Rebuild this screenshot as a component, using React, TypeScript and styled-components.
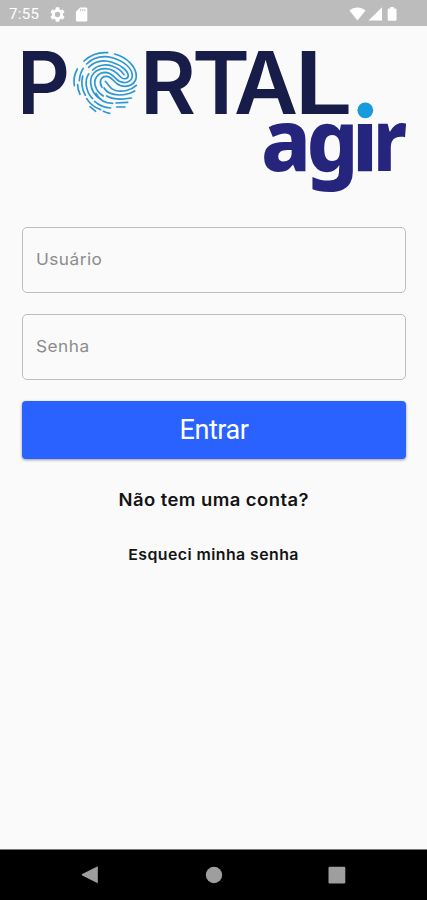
import React from 'react';
import styled, { createGlobalStyle } from 'styled-components';

const GlobalStyle = createGlobalStyle`
  * { box-sizing: border-box; }
  body { margin: 0; background: #fafafa; }
`;

const Screen = styled.div`
  width: 100%;
  height: 100vh;
  display: flex;
  flex-direction: column;
  background: #fafafa;
  font-family: Inter, 'Open Sans', sans-serif;
  overflow: hidden;
`;

const StatusBar = styled.header`
  height: 26px;
  flex: none;
  display: flex;
  align-items: center;
  justify-content: space-between;
  padding: 2px 27px 0 9px;
  background: #bcbcbc;
  color: #fff;
`;

const StatusGroup = styled.div<{ $gap: number }>`
  display: flex;
  align-items: center;
  gap: ${(p) => p.$gap}px;
  svg { display: block; }
`;

const Clock = styled.span`
  font: 400 15px/20px Roboto, sans-serif;
  letter-spacing: 0.3px;
  margin-right: 3px;
`;

const Content = styled.main`
  flex: 1;
  display: flex;
  flex-direction: column;
  align-items: stretch;
  padding: 14px 21px 0 22px;
`;

const Logo = styled.svg`
  display: block;
  width: 384px;
  height: 160px;
  margin-bottom: 27px;
  overflow: visible;
`;

const Field = styled.label`
  height: 66px;
  flex: none;
  display: flex;
  align-items: center;
  gap: 8px;
  padding: 0 13px 2px;
  margin-bottom: 21px;
  border: 1.5px solid #bdbdbd;
  border-radius: 5px;
`;

const FieldLabel = styled.span`
  font-size: 16.5px;
  line-height: 24px;
  letter-spacing: 0.45px;
  color: #8c8c8c;
  transform: scaleX(1.045);
  transform-origin: left;
`;

const FieldInput = styled.input`
  flex: 1;
  min-width: 0;
  border: 0;
  outline: 0;
  background: transparent;
  font: inherit;
`;

const SubmitButton = styled.button`
  height: 58px;
  flex: none;
  border: 0;
  border-radius: 4px;
  padding: 0;
  background: #2962ff;
  color: #fff;
  font: 400 27px/58px Roboto, sans-serif;
  letter-spacing: -0.45px;
  box-shadow: 0 1px 3px rgba(0, 0, 0, 0.4);
`;

const TextLink = styled.a<{ $size: number; $top: number }>`
  align-self: center;
  margin-top: ${(p) => p.$top}px;
  font-size: ${(p) => p.$size}px;
  font-weight: 600;
  line-height: 24px;
  letter-spacing: 0.4px;
  color: #141414;
  white-space: nowrap;
  transform: scaleX(${(p) => (p.$size > 16 ? 1.085 : 1.06)});
`;

const NavBar = styled.nav`
  height: 51px;
  flex: none;
  display: flex;
  align-items: center;
  justify-content: space-between;
  padding: 0 81px 0 80px;
  background: #000;
  border-top: 1px solid #777;
  svg { display: block; }
`;

const wordmark = [
  { letter: 'P', x: 17, width: 53 },
  { letter: 'R', x: 140, width: 56 },
  { letter: 'T', x: 192, width: 58 },
  { letter: 'A', x: 234, width: 64 },
  { letter: 'L', x: 294.2, width: 58.5 },
];

const agir = [
  { letter: 'a', x: 261, width: 50 },
  { letter: 'g', x: 306.5, width: 52 },
  { letter: 'i', x: 352, width: 26 },
  { letter: 'r', x: 373, width: 34 },
];

// Fingerprint ridges, from the outer whorl to the loose ends at the bottom.
const ridges = [
  'M72 63C90 46 117 36 143 38',
  'M164 42C202 52 230 82 229 110C227 132 206 144 182 137C160 130 158 108 138 109C122 110 116 126 126 142',
  'M80 72C104 48 134 47 160 54C192 64 217 84 217 108C216 126 194 132 178 124C164 116 158 98 137 97C112 97 100 118 106 138C110 152 120 162 130 168',
  'M58 122C59 108 62 96 70 85',
  'M86 82C106 62 132 59 156 67C184 76 204 92 205 107C204 118 190 119 182 111C170 98 158 86 136 86C106 86 90 106 92 130C94 150 106 168 122 178',
  'M98 90C114 74 138 72 156 78C174 84 186 94 192 104',
  'M86 102C72 122 78 156 98 176',
  'M52 87C43 103 40 120 43 137',
  'M68 108C62 132 66 148 76 166',
  'M53 134C53 144 56 154 60 163',
  'M136 124C146 132 148 146 164 151C188 158 214 150 229 136',
  'M132 144C140 158 156 164 178 165C196 165 212 160 224 153',
  'M140 168C154 176 172 178 192 177L214 174',
  'M108 160C118 180 138 190 158 190',
  'M168 189L203 187',
  'M104 184C118 197 134 203 152 204',
  'M80 176C90 192 104 203 122 209',
  'M90 200L107 214',
  'M130 214C136 217 142 219 149 220',
  'M170 201L195 201',
];

function PortalLogo() {
  return (
    <Logo viewBox="22 40 384 160" role="img" aria-label="Portal agir">
      <defs>
        <clipPath id="below-dot">
          <rect x="255" y="120.5" width="160" height="80" />
        </clipPath>
      </defs>
      <g fill="#171d48" fontFamily="Inter, sans-serif" fontWeight="600" fontSize="87">
        {wordmark.map((l) => (
          <text key={l.letter} x={l.x} y="114.3" textLength={l.width} lengthAdjust="spacingAndGlyphs">
            {l.letter}
          </text>
        ))}
      </g>
      <g transform="translate(60 40) scale(.3333)" fill="none" stroke="#2c97d3" strokeWidth="5" strokeLinecap="round">
        {ridges.map((d) => (
          <path key={d} d={d} />
        ))}
      </g>
      <g fill="#25257e" fontFamily="'Noto Sans', sans-serif" fontWeight="800" fontSize="86" clipPath="url(#below-dot)">
        {agir.map((l) => (
          <text key={l.letter} x={l.x} y="170.7" textLength={l.width} lengthAdjust="spacingAndGlyphs">
            {l.letter}
          </text>
        ))}
      </g>
      <circle cx="365.3" cy="110.3" r="7.9" fill="#189bdc" />
    </Logo>
  );
}

export default function App() {
  return (
    <Screen>
      <GlobalStyle />
      <StatusBar>
        <StatusGroup $gap={8}>
          <Clock>7:55</Clock>
          <svg width="15" height="15" viewBox="2 2 20 20" fill="#fff">
            <path d="M19.14 12.94c.04-.3.06-.61.06-.94s-.02-.64-.07-.94l2.03-1.58a.49.49 0 0 0 .12-.61l-1.92-3.32a.49.49 0 0 0-.59-.22l-2.39.96a7 7 0 0 0-1.62-.94l-.36-2.54a.48.48 0 0 0-.48-.41h-3.84a.48.48 0 0 0-.47.41l-.36 2.54c-.59.24-1.13.57-1.62.94l-2.39-.96a.48.48 0 0 0-.59.22L2.74 8.87a.48.48 0 0 0 .12.61l2.03 1.58a7.7 7.7 0 0 0 0 1.88l-2.03 1.58a.49.49 0 0 0-.12.61l1.92 3.32c.12.22.37.29.59.22l2.39-.96c.5.38 1.03.7 1.62.94l.36 2.54c.05.24.24.41.48.41h3.84c.24 0 .44-.17.47-.41l.36-2.54c.59-.24 1.13-.56 1.62-.94l2.39.96c.22.08.47 0 .59-.22l1.92-3.32a.48.48 0 0 0-.12-.61zM12 15.6a3.6 3.6 0 1 1 0-7.2 3.6 3.6 0 0 1 0 7.2z" />
          </svg>
          <svg width="17" height="15" viewBox="0 0 17 15">
            <path d="M7.2.5H13a1.3 1.3 0 0 1 1.3 1.3v11.4a1.3 1.3 0 0 1-1.3 1.3H4.2a1.3 1.3 0 0 1-1.3-1.3V4.8z" fill="#fff" />
            <path d="M7.7 2.2v2M9.8 2.2v2M11.9 2.2v2" stroke="#bcbcbc" strokeWidth="1" />
          </svg>
        </StatusGroup>
        <StatusGroup $gap={2}>
          <svg width="17" height="14" viewBox="0 0 17 14" fill="#fff">
            <path d="M8.5 13.5L.4 3.5C2.7 1.5 5.5.5 8.5.5s5.8 1 8.1 3z" />
          </svg>
          <svg width="15" height="14" viewBox="0 0 15 14" fill="#fff">
            <path d="M14 .3V13.5H.5z" />
          </svg>
          <svg width="15" height="14" viewBox="0 0 15 14" fill="#fff">
            <path d="M5.3 1.4V0h3.6v1.4h1.4a1.2 1.2 0 0 1 1.2 1.2v10a1.2 1.2 0 0 1-1.2 1.2H3.9a1.2 1.2 0 0 1-1.2-1.2v-10a1.2 1.2 0 0 1 1.2-1.2z" />
          </svg>
        </StatusGroup>
      </StatusBar>
      <Content>
        <PortalLogo />
        <Field>
          <FieldLabel>Usuário</FieldLabel>
          <FieldInput type="text" />
        </Field>
        <Field>
          <FieldLabel>Senha</FieldLabel>
          <FieldInput type="password" />
        </Field>
        <SubmitButton type="button">Entrar</SubmitButton>
        <TextLink $size={17} $top={29}>Não tem uma conta?</TextLink>
        <TextLink $size={15} $top={31}>Esqueci minha senha</TextLink>
      </Content>
      <NavBar>
        <svg width="19" height="20" viewBox="0 0 19 20" fill="#9e9e9e">
          <path d="M17.8 1.2v17L2.2 10.6Q1.2 9.7 2.2 8.9z" />
        </svg>
        <svg width="18" height="18" viewBox="0 0 18 18" fill="#9e9e9e">
          <circle cx="9" cy="9" r="8.2" />
        </svg>
        <svg width="18" height="18" viewBox="0 0 18 18" fill="#9e9e9e">
          <rect x="0.5" y="0.7" width="16.8" height="16.8" rx="1.2" />
        </svg>
      </NavBar>
    </Screen>
  );
}
